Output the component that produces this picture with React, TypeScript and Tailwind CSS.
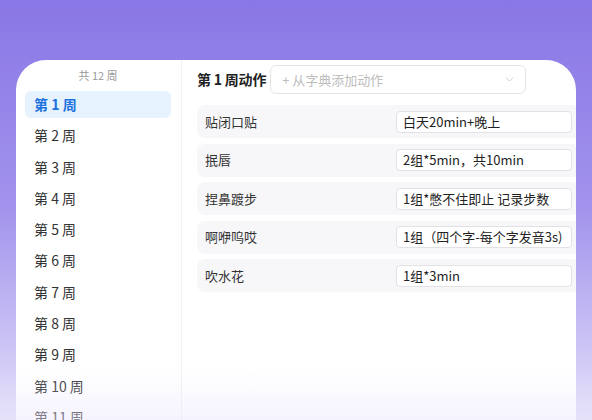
import { ChevronDown } from 'lucide-react';

const weeks = Array.from({ length: 12 }, (_, i) => i + 1);

const actions = [
    { name: '贴闭口贴', value: '白天20min+晚上' },
    { name: '抿唇', value: '2组*5min，共10min' },
    { name: '捏鼻踱步', value: '1组*憋不住即止 记录步数' },
    { name: '啊咿呜哎', value: '1组（四个字-每个字发音3s)' },
    { name: '吹水花', value: '1组*3min' },
];

export default function App() {
    return (
        <div
            className="relative w-[592px] h-[420px] overflow-hidden bg-gradient-to-b from-[#8a77e6] via-[#a393ec] to-[#e4dff8] pt-[60px] px-[16px]"
            style={{ fontFamily: '"Noto Sans CJK SC", "Noto Sans", sans-serif' }}
        >
            <div className="flex h-[400px] bg-white rounded-t-[30px] overflow-hidden">
                {/* week list */}
                <div className="w-[166px] shrink-0 border-r border-[#f1f1f4] pl-[9px] pr-[10px]">
                    <div className="pt-[7px] h-[31px] text-center text-[11px] leading-[16px] text-[#999]">
                        共 12 周
                    </div>
                    <div className="flex flex-col gap-[4.3px]">
                        {weeks.map((w) =>
                            w === 1 ? (
                                <div
                                    key={w}
                                    className="h-[27px] shrink-0 flex items-center pl-[9px] rounded-[6px] bg-[#e6f2fe] text-[14px] font-bold text-[#1d72e0]"
                                >
                                    第 {w} 周
                                </div>
                            ) : (
                                <div
                                    key={w}
                                    className="h-[27px] shrink-0 flex items-center pl-[9px] text-[14px] text-[#333]"
                                >
                                    第 {w} 周
                                </div>
                            ),
                        )}
                    </div>
                </div>

                {/* actions */}
                <div className="flex-1 pl-[15px] pt-[5px]">
                    <div className="flex items-center gap-[4px]">
                        <span className="text-[14px] font-bold text-[#222] whitespace-nowrap tracking-[-0.2px]">第 1 周动作</span>
                        <div className="w-[256px] h-[29px] flex items-center justify-between border border-[#e4e4e7] rounded-[6px] pl-[11px] pr-[9px]">
                            <span className="text-[13px] text-[#bdbdbd]">+ 从字典添加动作</span>
                            <ChevronDown className="w-[13px] h-[13px] text-[#c4c4c4]" strokeWidth={1.5} />
                        </div>
                    </div>

                    <div className="mt-[11px] flex flex-col gap-[5.5px] -mr-[4px]">
                        {actions.map((a) => (
                            <div
                                key={a.name}
                                className="h-[33px] flex items-center justify-between rounded-[8px] bg-[#f7f7f9] pl-[8px] pr-[8px]"
                            >
                                <span className="text-[13px] text-[#333]">{a.name}</span>
                                <div className="w-[176px] h-[22px] flex items-center bg-white border border-[#e2e2e6] rounded-[4px] px-[6px] text-[13px] text-[#222] whitespace-nowrap overflow-hidden">
                                    {a.value}
                                </div>
                            </div>
                        ))}
                    </div>
                </div>
            </div>

            {/* bottom fade */}
            <div className="absolute left-0 right-0 bottom-0 h-[52px] bg-gradient-to-b from-[#f3f0fc00] to-[#e9e4fb70]" />
        </div>
    );
}
